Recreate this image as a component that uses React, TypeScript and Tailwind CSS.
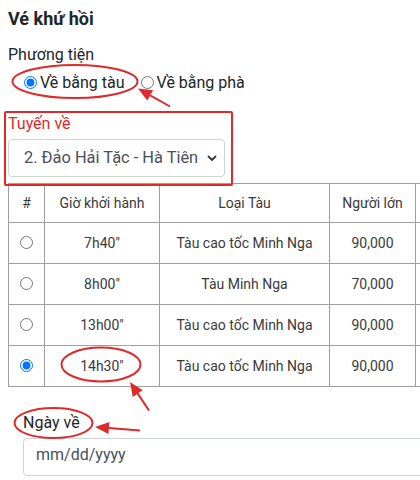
import React from "react";

const RED = "#dd2a2a";

type Pt = [number, number];

// annotation arrow: line from tail, filled head ending at tip
const Arrow = ({ tail, tip }: { tail: Pt; tip: Pt }) => {
  const dx = tip[0] - tail[0];
  const dy = tip[1] - tail[1];
  const len = Math.hypot(dx, dy);
  const ux = dx / len;
  const uy = dy / len;
  const headLen = 14;
  const half = 6;
  const bx = tip[0] - ux * headLen;
  const by = tip[1] - uy * headLen;
  const p1 = `${bx - uy * half},${by + ux * half}`;
  const p2 = `${bx + uy * half},${by - ux * half}`;
  return (
    <g>
      <line x1={tail[0]} y1={tail[1]} x2={bx} y2={by} stroke={RED} strokeWidth={2} />
      <polygon points={`${tip[0]},${tip[1]} ${p1} ${p2}`} fill={RED} />
    </g>
  );
};

const rows = [
  { time: "7h40\"", ship: "Tàu cao tốc Minh Nga", adult: "90,000", checked: false },
  { time: "8h00\"", ship: "Tàu Minh Nga", adult: "70,000", checked: false },
  { time: "13h00\"", ship: "Tàu cao tốc Minh Nga", adult: "90,000", checked: false },
  { time: "14h30\"", ship: "Tàu cao tốc Minh Nga", adult: "90,000", checked: true },
];

export default function App() {
  return (
    <div className="relative w-[420px] h-[480px] overflow-hidden bg-white font-[Roboto,sans-serif] text-[#212529]">
      <div className="pl-2">
        <h2 className="pt-2 text-[18px] leading-[22px] font-bold">Vé khứ hồi</h2>
        <div className="mt-[12.5px] text-base leading-6">Phương tiện</div>
        <div className="mt-1 flex items-center h-6 pl-4 text-base leading-6">
          <input type="radio" name="mode" defaultChecked className="m-0 w-[13px] h-[13px]" />
          <span className="ml-[3px]">Về bằng tàu</span>
          <input type="radio" name="mode" className="m-0 ml-4 w-[13px] h-[13px]" />
          <span className="ml-[3px]">Về bằng phà</span>
        </div>

        <div className="mt-[17px] text-base leading-6 text-[#dd2a2a]">Tuyến về</div>
        <div className="mt-[3.5px] w-[217px] h-[38px] flex items-center justify-between border border-[#ced4da] rounded pl-[15px] pr-[7px] text-[16.4px] text-[#495057]">
          <span>2. Đảo Hải Tặc - Hà Tiên</span>
          <svg width="10" height="7" viewBox="0 0 10 7" fill="none">
            <path d="M1.5 1.5 L5 5 L8.5 1.5" stroke="#343a40" strokeWidth="1.8" strokeLinecap="round" strokeLinejoin="round" />
          </svg>
        </div>

        <table className="mt-[6px] table-fixed border-collapse w-[527px] text-[14px] text-[#3a3a3a]">
          <colgroup>
            <col className="w-[36px]" />
            <col className="w-[115px]" />
            <col className="w-[170px]" />
            <col className="w-[86px]" />
            <col className="w-[120px]" />
          </colgroup>
          <thead>
            <tr className="h-[39px]">
              {["#", "Giờ khởi hành", "Loại Tàu", "Người lớn", ""].map((h, i) => (
                <th key={i} className="border border-[#a0a0a0] font-normal text-center p-0">
                  {h}
                </th>
              ))}
            </tr>
          </thead>
          <tbody>
            {rows.map((r, i) => (
              <tr key={i} className="h-[41px]">
                <td className="border border-[#a0a0a0] text-center p-0">
                  <input type="radio" name="trip" defaultChecked={r.checked} className="m-0 w-[13px] h-[13px] align-[-1px]" />
                </td>
                <td className="border border-[#a0a0a0] text-center p-0">{r.time}</td>
                <td className="border border-[#a0a0a0] text-center p-0">{r.ship}</td>
                <td className="border border-[#a0a0a0] text-center p-0">{r.adult}</td>
                <td className="border border-[#a0a0a0] p-0" />
              </tr>
            ))}
          </tbody>
        </table>

        <div className="pl-[15px]">
          <div className="mt-[24px] text-base leading-6">Ngày về</div>
          <div className="mt-[2.5px] w-[420px] h-[38px] flex items-center border border-[#ced4da] rounded px-3 pb-[3px] text-base text-[#495057]">
            mm/dd/yyyy
          </div>
          <div className="mt-[4px] w-[420px] h-[20px] border-t border-x border-[#ced4da] rounded-t" />
        </div>
      </div>

      <svg className="absolute left-0 top-0 pointer-events-none" width="420" height="480" viewBox="0 0 420 480" fill="none">
        <ellipse cx="75" cy="81.5" rx="62.5" ry="16.5" stroke={RED} strokeWidth="2" />
        <Arrow tail={[170, 106.5]} tip={[138, 88.5]} />
        <rect x="5" y="112" width="227" height="73" rx="1" stroke={RED} strokeWidth="2" />
        <ellipse cx="101" cy="364.5" rx="39.5" ry="17" stroke={RED} strokeWidth="2" />
        <Arrow tail={[149, 410.5]} tip={[130, 382]} />
        <ellipse cx="53.5" cy="423" rx="39" ry="15" stroke={RED} strokeWidth="2" />
        <Arrow tail={[140, 430.5]} tip={[95, 427]} />
      </svg>
    </div>
  );
}
